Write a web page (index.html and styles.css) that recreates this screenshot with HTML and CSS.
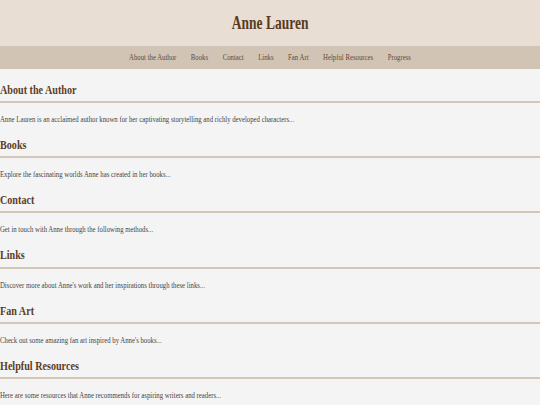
FILE: index.html
```html
<!DOCTYPE html>
<html lang="en">
<head>
<meta charset="utf-8">
<title>Anne Lauren</title>
<link rel="stylesheet" href="styles.css">
</head>
<body>
  <header class="site-header">
    <h1 class="site-title"><span class="narrow narrow-center">Anne Lauren</span></h1>
  </header>
  <nav class="site-nav">
    <ul class="nav-list">
      <li class="nav-item"><a class="nav-link" href="#about">About the Author</a></li>
      <li class="nav-item"><a class="nav-link" href="#books">Books</a></li>
      <li class="nav-item"><a class="nav-link" href="#contact">Contact</a></li>
      <li class="nav-item"><a class="nav-link" href="#links">Links</a></li>
      <li class="nav-item"><a class="nav-link" href="#fanart">Fan Art</a></li>
      <li class="nav-item"><a class="nav-link" href="#resources">Helpful Resources</a></li>
      <li class="nav-item"><a class="nav-link" href="#progress">Progress</a></li>
    </ul>
  </nav>
  <main class="content">
    <section class="section" id="about">
      <h2 class="section-title"><span class="narrow">About the Author</span></h2>
      <p class="section-text"><span class="narrow">Anne Lauren is an acclaimed author known for her captivating storytelling and richly developed characters...</span></p>
    </section>
    <section class="section" id="books">
      <h2 class="section-title"><span class="narrow">Books</span></h2>
      <p class="section-text"><span class="narrow">Explore the fascinating worlds Anne has created in her books...</span></p>
    </section>
    <section class="section" id="contact">
      <h2 class="section-title"><span class="narrow">Contact</span></h2>
      <p class="section-text"><span class="narrow">Get in touch with Anne through the following methods...</span></p>
    </section>
    <section class="section" id="links">
      <h2 class="section-title"><span class="narrow">Links</span></h2>
      <p class="section-text"><span class="narrow">Discover more about Anne's work and her inspirations through these links...</span></p>
    </section>
    <section class="section" id="fanart">
      <h2 class="section-title"><span class="narrow">Fan Art</span></h2>
      <p class="section-text"><span class="narrow">Check out some amazing fan art inspired by Anne's books...</span></p>
    </section>
    <section class="section" id="resources">
      <h2 class="section-title"><span class="narrow">Helpful Resources</span></h2>
      <p class="section-text"><span class="narrow">Here are some resources that Anne recommends for aspiring writers and readers...</span></p>
    </section>
  </main>
</body>
</html>
```
FILE: styles.css
```css
html {
  overflow: hidden;
  background: #f4f4f4;
}

body {
  margin: 0;
  background: #f4f4f4;
  font-family: "Liberation Serif", "Times New Roman", serif;
}

/* the typeface is a condensed serif: narrow the glyphs horizontally */
.narrow {
  display: inline-block;
  transform: scaleX(0.75);
  transform-origin: 0 50%;
  white-space: nowrap;
}

.narrow-center {
  transform-origin: 50% 50%;
}

.site-header {
  background: #e8ded4;
  height: 46px;
  text-align: center;
}

.site-title {
  margin: 0;
  font-size: 18px;
  line-height: 46px;
  font-weight: bold;
  color: #5a3a22;
}

.site-nav {
  background: #d2c4b4;
  height: 23px;
}

.nav-list {
  list-style: none;
  margin: 0;
  padding: 0;
  display: flex;
  justify-content: center;
  transform: scaleX(0.75);
  transform-origin: 50% 50%;
}

.nav-item {
  padding: 0 9.7px;
}

.nav-link {
  display: block;
  font-size: 9px;
  line-height: 23px;
  color: #5b4a3a;
  text-decoration: none;
}

.content {
  padding-top: 12.9px;
}

.section-title {
  margin: 0;
  font-size: 13.5px;
  line-height: 16px;
  font-weight: bold;
  color: #5c3d26;
  padding-bottom: 3.1px;
  border-bottom: 2px solid #d5c7b8;
}

.section-text {
  margin: 11px 0 12.1px;
  font-size: 9px;
  line-height: 11px;
  color: #444444;
}
```
